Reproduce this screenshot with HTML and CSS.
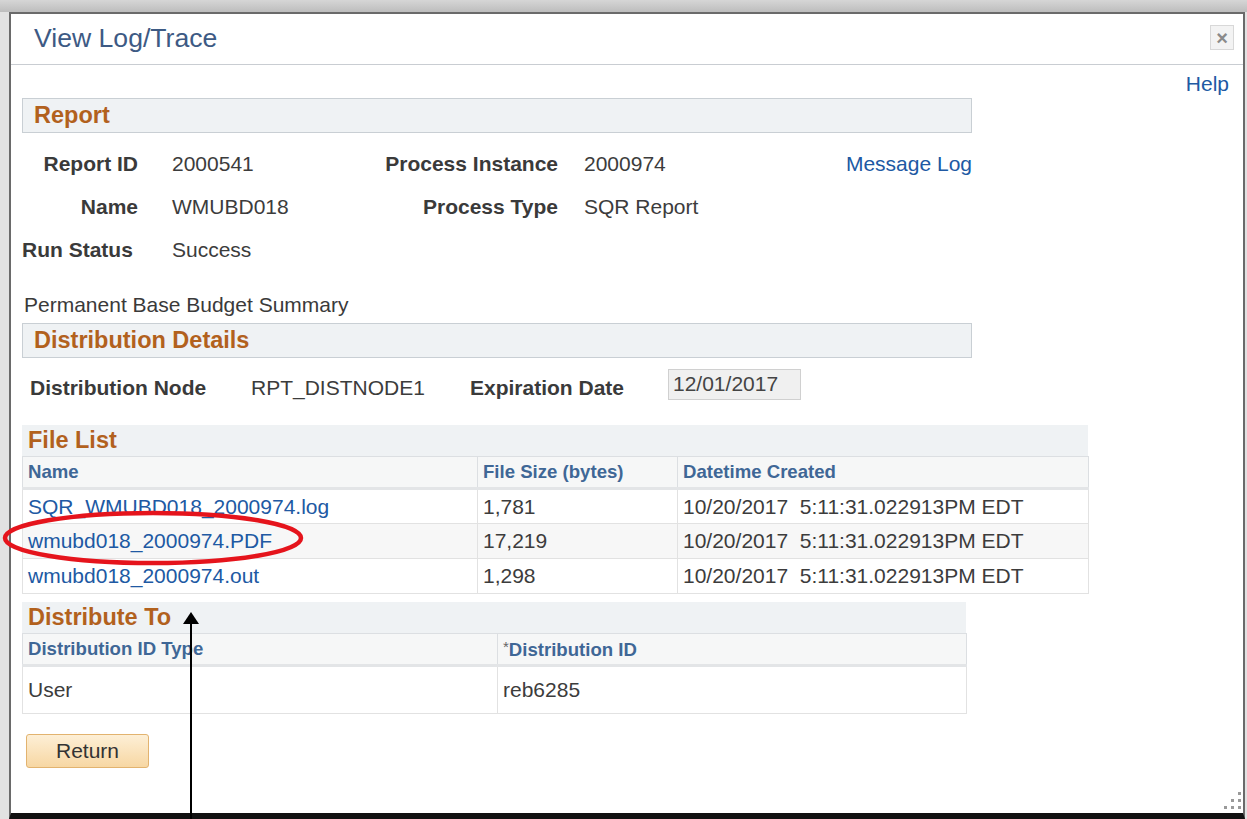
FILE: index.html
```html
<!DOCTYPE html>
<html lang="en">
<head>
<meta charset="utf-8">
<title>View Log/Trace</title>
<link rel="stylesheet" href="styles.css">
</head>
<body>
<div class="backdrop">
  <div class="dialog">
    <div class="dlg-head">
      <h1 class="dlg-title">View Log/Trace</h1>
      <button class="dlg-close" type="button" aria-label="Close">&#215;</button>
    </div>

    <div class="dlg-body">
      <div class="help-row"><a class="link" href="#">Help</a></div>

      <div class="sect-head">Report</div>
      <div class="field-grid">
        <span class="lbl">Report ID</span>
        <span class="val">2000541</span>
        <span class="lbl">Process Instance</span>
        <span class="val val-b">2000974</span>
        <a class="link msg-log" href="#">Message Log</a>

        <span class="lbl">Name</span>
        <span class="val">WMUBD018</span>
        <span class="lbl">Process Type</span>
        <span class="val val-b">SQR Report</span>
        <span></span>

        <span class="lbl lbl-left">Run Status</span>
        <span class="val">Success</span>
        <span></span><span></span><span></span>
      </div>

      <p class="desc">Permanent Base Budget Summary</p>

      <div class="sect-head">Distribution Details</div>
      <div class="dist-row">
        <span class="lbl dist-lbl">Distribution Node</span>
        <span class="val dist-val">RPT_DISTNODE1</span>
        <span class="lbl dist-lbl2">Expiration Date</span>
        <span class="ro-input">12/01/2017</span>
      </div>

      <div class="grid-block file-list">
        <div class="grid-title">File List</div>
        <table class="grid">
          <colgroup><col class="c-name"><col class="c-size"><col class="c-date"></colgroup>
          <thead>
            <tr><th>Name</th><th>File Size (bytes)</th><th>Datetime Created</th></tr>
          </thead>
          <tbody>
            <tr><td><a class="link" href="#">SQR_WMUBD018_2000974.log</a></td><td>1,781</td><td>10/20/2017&nbsp; 5:11:31.022913PM EDT</td></tr>
            <tr class="alt"><td><a class="link" href="#">wmubd018_2000974.PDF</a></td><td>17,219</td><td>10/20/2017&nbsp; 5:11:31.022913PM EDT</td></tr>
            <tr><td><a class="link" href="#">wmubd018_2000974.out</a></td><td>1,298</td><td>10/20/2017&nbsp; 5:11:31.022913PM EDT</td></tr>
          </tbody>
        </table>
      </div>

      <div class="grid-block dist-to">
        <div class="grid-title">Distribute To</div>
        <table class="grid">
          <colgroup><col class="c-type"><col class="c-id"></colgroup>
          <thead>
            <tr><th>Distribution ID Type</th><th><span class="req">*</span>Distribution ID</th></tr>
          </thead>
          <tbody>
            <tr class="tall"><td>User</td><td>reb6285</td></tr>
          </tbody>
        </table>
      </div>

      <button class="btn" type="button">Return</button>
    </div>

    <div class="grip">
      <i></i><i></i><i></i><i></i><i></i><i></i>
    </div>
  </div>

  <svg class="annot" width="1247" height="819" viewBox="0 0 1247 819">
    <ellipse cx="153" cy="538" rx="148" ry="25" fill="none" stroke="#e5141c" stroke-width="4.5"/>
    <line x1="191" y1="621" x2="191" y2="819" stroke="#000" stroke-width="2"/>
    <polygon points="191,612 183,624 199,624" fill="#000"/>
  </svg>
</div>
</body>
</html>
```

FILE: styles.css
```css
* { box-sizing: border-box; }

html, body {
  margin: 0;
  padding: 0;
}

body {
  width: 1247px;
  height: 819px;
  overflow: hidden;
  background: #e2e2e2;
  font-family: "Liberation Sans", Arial, sans-serif;
  color: #333;
}

.backdrop {
  position: relative;
  width: 1247px;
  height: 819px;
  padding: 12px 0 0 9px;
  background: linear-gradient(to bottom, #d6d6d6 0, #bdbdbd 12px, #e2e2e2 12px);
}

/* modal window */
.dialog {
  position: relative;
  width: 1236px;
  height: 807px;
  background: #fff;
  border: 2px solid #6a6a6a;
  border-bottom: 6px solid #111;
  display: flex;
  flex-direction: column;
}

.dlg-head {
  height: 51px;
  display: flex;
  align-items: flex-start;
  border-bottom: 1px solid #c9cdd2;
  padding: 0 9px 0 23px;
}

.dlg-title {
  margin: 0;
  font-weight: normal;
  font-size: 26.6px;
  line-height: 49px;
  color: #3d5a84;
}

.dlg-close {
  margin: 11px 0 0 auto;
  width: 24px;
  height: 25px;
  padding: 0;
  border: 1px solid #d8d8d8;
  background: #f3f3f3;
  color: #8a8a8a;
  font-family: "Liberation Sans", Arial, sans-serif;
  font-size: 20px;
  line-height: 22px;
  font-weight: bold;
}

.dlg-body {
  padding: 0 14px 0 11px;
  font-size: 21px;
}

.link {
  color: #2059a3;
  text-decoration: none;
}

.help-row {
  margin-top: 7px;
  text-align: right;
  line-height: 24px;
}

.sect-head {
  margin-top: 2px;
  width: 950px;
  height: 35px;
  padding-left: 11px;
  border: 1px solid #c9cfd4;
  background: #eff2f4;
  color: #b2611d;
  font-weight: bold;
  font-size: 23.5px;
  line-height: 32px;
}

.field-grid {
  margin-top: 9px;
  width: 950px;
  display: grid;
  grid-template-columns: 116px 214px 206px 246px 168px;
  grid-auto-rows: 43px;
  align-items: center;
}

.lbl {
  font-weight: bold;
  color: #3a3a3a;
  text-align: right;
  white-space: nowrap;
}

.lbl-left { text-align: left; }

.val {
  padding-left: 34px;
  color: #3c3c3c;
  white-space: nowrap;
}

.val-b { padding-left: 26px; }

.msg-log { text-align: right; }

.desc {
  margin: 22px 0 6px 2px;
  line-height: 24px;
  color: #3a3a3a;
}

.sect-head + .dist-row { margin-top: 11px; }

.dist-row {
  height: 31px;
  display: grid;
  grid-template-columns: 229px 219px 198px 133px;
  align-items: stretch;
}

.dist-row .lbl,
.dist-row .val {
  text-align: left;
  padding-top: 7px;
  line-height: 24px;
}

.dist-lbl { padding-left: 8px; }
.dist-val { padding-left: 0; }

.ro-input {
  border: 1px solid #d0d0d0;
  background: #f0f0f0;
  color: #444;
  padding-left: 4px;
  line-height: 28px;
}

/* grids */
.grid-block {
  display: flex;
  flex-direction: column;
}

.file-list { margin-top: 25px; width: 1066px; }
.dist-to { margin-top: 8px; width: 944px; }

.grid-title {
  height: 31px;
  padding-left: 6px;
  background: #eff2f4;
  color: #b2611d;
  font-weight: bold;
  font-size: 23.5px;
  line-height: 31px;
}

.grid {
  width: 100%;
  border-collapse: collapse;
  table-layout: fixed;
}

.c-name { width: 455px; }
.c-size { width: 200px; }
.c-date { width: 411px; }
.c-type { width: 475px; }
.c-id { width: 469px; }

.grid th {
  height: 32px;
  padding: 0 0 0 5px;
  text-align: left;
  background: #f6f7f7;
  border: 1px solid #dcdfe2;
  border-bottom: 3px solid #e3e5e7;
  color: #3f6796;
  font-size: 18.6px;
  font-weight: bold;
  white-space: nowrap;
}

.grid td {
  height: 35px;
  padding: 0 0 0 5px;
  border: 1px solid #e2e2e2;
  color: #3c3c3c;
  white-space: nowrap;
  font-size: 21px;
}

.grid .alt td { background: #f7f7f7; }
.grid .tall td { height: 48px; }

.req {
  font-weight: normal;
  font-size: 15px;
  color: #666;
  vertical-align: 4px;
}

.btn {
  margin: 20px 0 0 4px;
  width: 123px;
  height: 34px;
  padding: 0;
  border: 1px solid #e2b36f;
  border-radius: 3px;
  background: linear-gradient(to bottom, #fdefd6 0%, #f7d7a3 100%);
  font-family: "Liberation Sans", Arial, sans-serif;
  font-size: 21px;
  color: #333;
  display: block;
}

/* resize handle in the window corner */
.grip {
  position: absolute;
  right: 2px;
  bottom: 4px;
  width: 17px;
  height: 17px;
  display: grid;
  grid-template-columns: repeat(3, 3px);
  grid-template-rows: repeat(3, 3px);
  gap: 4px;
}

.grip i {
  display: block;
  background: #9a9a9a;
}

.grip i:nth-child(1) { grid-column: 3; grid-row: 1; }
.grip i:nth-child(2) { grid-column: 2; grid-row: 2; }
.grip i:nth-child(3) { grid-column: 3; grid-row: 2; }
.grip i:nth-child(4) { grid-column: 1; grid-row: 3; }
.grip i:nth-child(5) { grid-column: 2; grid-row: 3; }
.grip i:nth-child(6) { grid-column: 3; grid-row: 3; }

/* callout marks drawn over the window */
.annot {
  position: absolute;
  left: 0;
  top: 0;
  pointer-events: none;
}
```
